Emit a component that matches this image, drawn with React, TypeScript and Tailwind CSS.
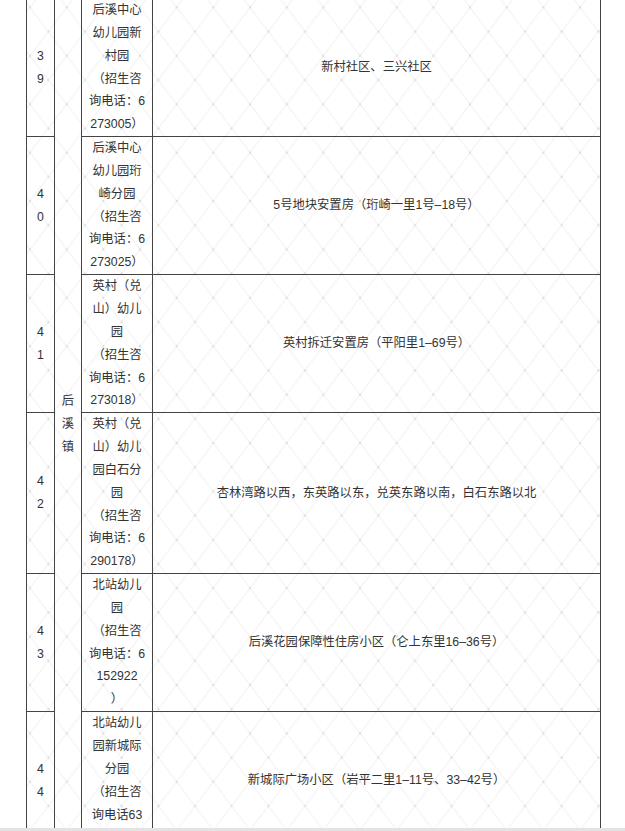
import React from "react";

type Row = { n: string[]; k: string[]; a: string };

const rows: Row[] = [
  { n: ["3", "9"], k: ["后溪中心", "幼儿园新", "村园", "（招生咨", "询电话：6", "273005）"], a: "新村社区、三兴社区" },
  { n: ["4", "0"], k: ["后溪中心", "幼儿园珩", "崎分园", "（招生咨", "询电话：6", "273025）"], a: "5号地块安置房（珩崎一里1号–18号）" },
  { n: ["4", "1"], k: ["英村（兑", "山）幼儿", "园", "（招生咨", "询电话：6", "273018）"], a: "英村拆迁安置房（平阳里1–69号）" },
  { n: ["4", "2"], k: ["英村（兑", "山）幼儿", "园白石分", "园", "（招生咨", "询电话：6", "290178）"], a: "杏林湾路以西，东英路以东，兑英东路以南，白石东路以北" },
  { n: ["4", "3"], k: ["北站幼儿", "园", "（招生咨", "询电话：6", "152922", "）"], a: "后溪花园保障性住房小区（仑上东里16–36号）" },
  { n: ["4", "4"], k: ["北站幼儿", "园新城际", "分园", "（招生咨", "询电话63", "72106）"], a: "新城际广场小区（岩平二里1–11号、33–42号）" },
];

function Lines({ items }: { items: string[] }) {
  return (
    <>
      {items.map((t, i) => (
        <React.Fragment key={i}>
          {t}
          {i < items.length - 1 && <br />}
        </React.Fragment>
      ))}
    </>
  );
}

function Pattern() {
  const w = 36.67;
  const h = 48.4;
  return (
    <svg className="absolute inset-0 -z-10 h-full w-full pointer-events-none" aria-hidden="true">
      <defs>
        <pattern id="lattice" x="3" y="8.4" width={w} height={h} patternUnits="userSpaceOnUse">
          <line x1="0" y1="0" x2={w} y2={h} stroke="#f3f3f3" strokeWidth="1.1" />
          <line x1={w} y1="0" x2="0" y2={h} stroke="#f3f3f3" strokeWidth="1.1" />
          <circle cx="0" cy="0" r="1" fill="#d6d6d6" />
          <circle cx={w} cy="0" r="1" fill="#d6d6d6" />
          <circle cx="0" cy={h} r="1" fill="#d6d6d6" />
          <circle cx={w} cy={h} r="1" fill="#d6d6d6" />
          <circle cx={w / 2} cy={h / 2} r="1" fill="#d6d6d6" />
        </pattern>
      </defs>
      <rect width="100%" height="100%" fill="url(#lattice)" />
    </svg>
  );
}

export default function App() {
  return (
    <div className="h-[831px] w-[625px] overflow-hidden bg-white font-['Liberation_Sans','Noto_Sans_CJK_SC',sans-serif] text-[12.3px] leading-[22.85px] text-[#333]">
      <div className="relative z-0 ml-[26px] -mt-[2px] grid w-[575px] grid-cols-[28px_27px_71px_448px] border-l border-t border-[#444]">
        <Pattern />
        <div className="col-start-2 row-start-1 row-span-6 flex items-center justify-center border-b border-r border-[#444] text-center">
          <div>
            后<br />溪<br />镇
          </div>
        </div>
        {rows.map((r, i) => (
          <React.Fragment key={i}>
            <div className="col-start-1 flex items-center justify-center border-b border-r border-[#444] text-center">
              <div>
                <Lines items={r.n} />
              </div>
            </div>
            <div className="col-start-3 border-b border-r border-[#444] px-[3px] text-center whitespace-nowrap">
              <Lines items={r.k} />
            </div>
            <div className="col-start-4 flex items-center justify-center border-b border-r border-[#444] text-center">
              <div>{r.a}</div>
            </div>
          </React.Fragment>
        ))}
      </div>
      <div className="fixed bottom-0 left-0 right-0 h-[3px] bg-[#e3e3e3]" />
    </div>
  );
}
